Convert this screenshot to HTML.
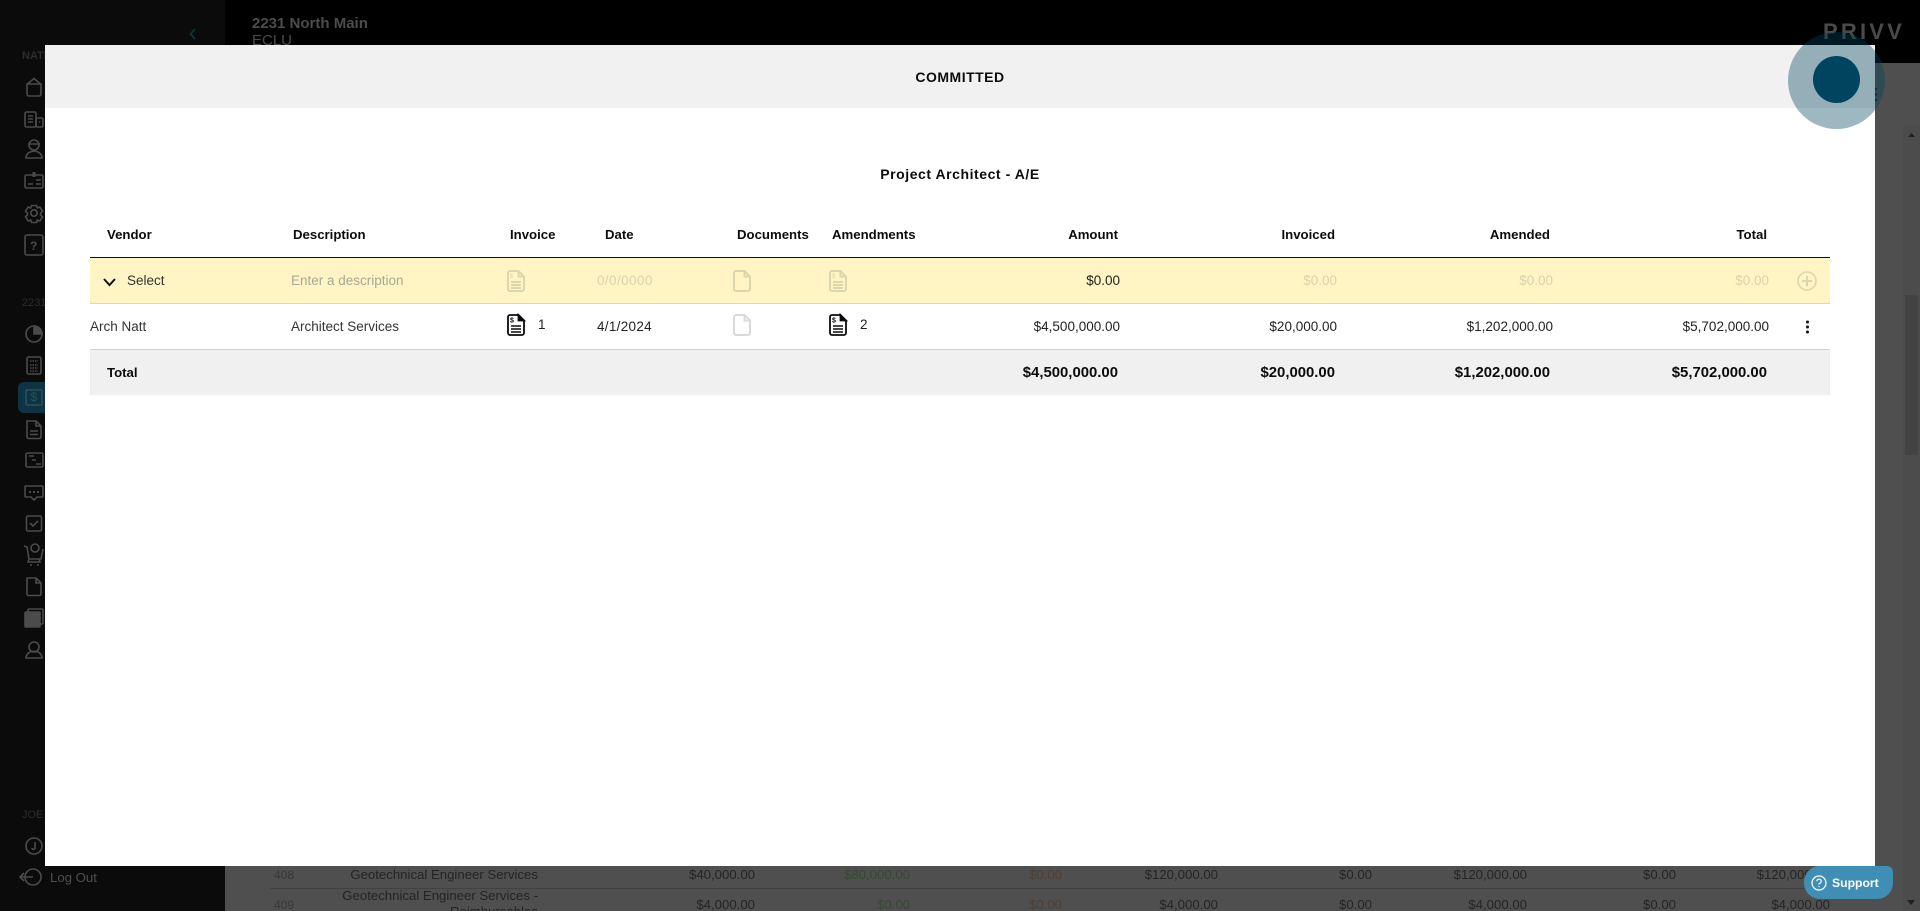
<!DOCTYPE html>
<html lang="en"><head><meta charset="utf-8"><title>Committed</title>
<style>
*{box-sizing:border-box}
html,body{margin:0;padding:0;width:1920px;height:911px;overflow:hidden;background:#4f4f4f}
body{font-family:"Liberation Sans",sans-serif;position:relative;color:#1a1a1a}
.a{position:absolute;white-space:nowrap;line-height:16px}
.t{font-size:13.5px;transform:translateY(-50%);margin-top:1px}
.tr{font-size:13.5px;transform:translate(-100%,-50%);margin-top:1px}
.b{font-weight:700;color:#0c0c0c}
.t.b,.tr.b{font-size:13.2px}
.tr.b.big{font-size:14.9px}
.m{color:#d8d3ae}
.bg{font-size:13.2px;color:#242424;transform:translate(-100%,-50%)}
svg{position:absolute;overflow:visible;fill:none}
.n{stroke:#4b4b4b;stroke-width:1.6}
</style></head><body>
<!-- app behind -->
<div class="a" style="left:0;top:0;width:225px;height:911px;background:#0b0b0b"></div>
<div class="a" style="left:225px;top:0;width:1695px;height:63px;background:#000"></div>
<div class="a" style="left:252px;top:16px;font-size:15px;font-weight:700;color:#4c4c4c">2231 North Main</div>
<div class="a" style="left:252px;top:33px;font-size:15px;color:#4c4c4c">ECLU</div>
<div class="a" style="left:1823px;top:24px;font-size:22px;font-weight:700;letter-spacing:3.2px;color:#4a4a4a">PRIVV</div>
<svg style="left:188px;top:27px" width="10" height="14" viewBox="0 0 10 14"><path d="M7 2 2.500 7 7 12" stroke="#12303c" stroke-width="2"/></svg>
<div class="a" style="left:22px;top:48px;font-size:11px;font-weight:700;color:#2c2c2c">NATE</div>
<div class="a" style="left:22px;top:295px;font-size:11px;color:#2c2c2c">2231</div>
<div class="a" style="left:22px;top:807px;font-size:11px;color:#2c2c2c">JOE</div>
<div class="a" style="left:18px;top:382px;width:40px;height:31px;background:#0e3443;border-radius:6px"></div>

<!-- sidebar icons -->
<svg class="n" style="left:0;top:0" width="60" height="911" viewBox="0 0 60 911">
<path d="M27.500 84 34 78.500 40.500 84M27 84h14v10a2 2 0 0 1-2 2H29a2 2 0 0 1-2-2Z"/>
<rect x="25" y="112" width="11" height="15" rx="1.500"/><rect x="36" y="118" width="7" height="9" rx="1.500"/><path d="M28 116h5M28 119h5M28 122h5M39 122h1"/>
<circle cx="34" cy="145" r="5"/><path d="M28 144h12M26 158c0-9 16-9 16 0Z"/>
<rect x="25" y="175" width="18" height="13" rx="1.500"/><path d="M28 184h5M36 180h5M36 184h5"/><path d="M34 172v5" stroke-width="3"/>
<circle cx="34" cy="213" r="3.200"/><path d="M31.500 205.500h5l.8 2.500 2.500-1 2.700 4.200-2 2v1.600l2 2-2.700 4.200-2.500-1-.8 2.500h-5l-.8-2.500-2.500 1-2.700-4.200 2-2v-1.600l-2-2 2.700-4.200 2.500 1Z"/>
<rect x="25" y="235" width="18" height="20" rx="2"/>
<circle cx="34" cy="334" r="8"/><path d="M34 326v8h8A8 8 0 0 0 34 326Z" fill="#4b4b4b"/>
<rect x="27" y="357" width="14" height="17" rx="1.500"/><path d="M30 361h8M30 365h8M30 368h8M30 371h8" stroke-dasharray="1.500 1"/>
<rect x="26" y="390" width="16" height="15" rx="1" stroke="#29505f"/>
<path d="M27 421h9l5 5v11a1.500 1.500 0 0 1-1.500 1.500h-11A1.500 1.500 0 0 1 27 437ZM36 421v5h5M30 431h8M30 434.500h8"/>
<rect x="26" y="453" width="17" height="14" rx="1.500"/><path d="M29 456h5M32 460h4M36 464h5"/>
<path d="M26 486h16a1 1 0 0 1 1 1v9a1 1 0 0 1-1 1h-5l-3 3-3-3h-5a1 1 0 0 1-1-1v-9a1 1 0 0 1 1-1Z"/><path d="M29 492h2M33 492h2M37 492h2" stroke-width="2"/>
<rect x="26.500" y="516" width="15" height="15" rx="1.500"/><path d="M30 523l3 3 5-5"/>
<path d="M24 546l3 1 2 12h12l2-10M29 559l-1 3h12l-1-3M30 565h2M37 565h2"/><circle cx="35" cy="548" r="4"/>
<path d="M27 578h9l5 5v11a1.500 1.500 0 0 1-1.500 1.500h-11A1.500 1.500 0 0 1 27 594ZM36 578v5h5"/>
<rect x="28" y="609" width="15" height="15" rx="1"/><rect x="25" y="612" width="15" height="15" rx="1" fill="#4b4b4b"/>
<circle cx="34" cy="647" r="5"/><path d="M26 658c0-9 16-9 16 0Z"/>
<circle cx="34" cy="846" r="8"/><path d="M35 842v6a1.500 1.500 0 0 1-3 0"/>
<circle cx="33" cy="877" r="8"/><path d="M20 877h13M24 873l-4 4 4 4"/>
</svg>
<div class="a" style="left:30px;top:238px;font-size:12px;font-weight:700;color:#4b4b4b">?</div>
<div class="a" style="left:30.500px;top:389px;font-size:12px;color:#29505f">$</div>
<div class="a" style="left:50px;top:870px;font-size:13.200px;color:#4f4f4f">Log Out</div>

<!-- background table -->
<div class="a" style="left:270px;top:888px;width:1600px;height:1px;background:#414141"></div>
<div class="a" style="left:274px;top:867px;font-size:12px;color:#383838">408</div>
<div class="a" style="left:274px;top:897px;font-size:12px;color:#383838">409</div>
<div class="a bg" style="left:538px;top:875px">Geotechnical Engineer Services</div>
<div class="a bg" style="left:538px;top:896px">Geotechnical Engineer Services -</div>
<div class="a bg" style="left:538px;top:912px">Reimbursables</div>
<div class="a bg" style="left:755px;top:875px">$40,000.00</div><div class="a bg" style="left:755px;top:905px">$4,000.00</div>
<div class="a bg" style="left:910px;top:875px;color:#344a30">$80,000.00</div><div class="a bg" style="left:910px;top:905px;color:#344a30">$0.00</div>
<div class="a bg" style="left:1062px;top:875px;color:#4d3f35">$0.00</div><div class="a bg" style="left:1062px;top:905px;color:#4d3f35">$0.00</div>
<div class="a bg" style="left:1218px;top:875px">$120,000.00</div><div class="a bg" style="left:1218px;top:905px">$4,000.00</div>
<div class="a bg" style="left:1372px;top:875px">$0.00</div><div class="a bg" style="left:1372px;top:905px">$0.00</div>
<div class="a bg" style="left:1527px;top:875px">$120,000.00</div><div class="a bg" style="left:1527px;top:905px">$4,000.00</div>
<div class="a bg" style="left:1676px;top:875px">$0.00</div><div class="a bg" style="left:1676px;top:905px">$0.00</div>
<div class="a bg" style="left:1830px;top:875px">$120,000.00</div><div class="a bg" style="left:1830px;top:905px">$4,000.00</div>

<!-- scrollbar -->
<div class="a" style="left:1903px;top:125px;width:17px;height:786px;background:#4c4c4c"></div>
<div class="a" style="left:1905px;top:295px;width:13px;height:160px;background:#434343"></div>
<svg style="left:1908px;top:133px" width="7" height="4"><path d="M3.500 0 7 4H0Z" fill="#1f1f1f"/></svg>
<svg style="left:1907px;top:900px" width="8" height="5"><path d="M0 0H8L4 5Z" fill="#1f1f1f"/></svg>

<!-- modal -->
<div class="a" style="left:45px;top:45px;width:1830px;height:821px;background:#fff"></div>
<div class="a" style="left:45px;top:45px;width:1830px;height:63px;background:#f1f1f1"></div>
<div class="a b" style="left:960px;top:77px;font-size:14px;letter-spacing:.5px;transform:translate(-50%,-50%)">COMMITTED</div>
<div class="a b" style="left:960px;top:174px;font-size:14px;letter-spacing:.55px;transform:translate(-50%,-50%)">Project Architect - A/E</div>

<div class="a" style="left:90px;top:257px;width:1740px;height:47px;background:#fff5c4;border-top:1px solid #111;border-bottom:1px solid #d6d6d0"></div>
<div class="a" style="left:90px;top:349px;width:1740px;height:46px;background:#f0f0f0;border-top:1px solid #d0d0d0"></div>

<div class="a t b" style="left:107px;top:234px">Vendor</div>
<div class="a t b" style="left:293px;top:234px">Description</div>
<div class="a t b" style="left:510px;top:234px">Invoice</div>
<div class="a t b" style="left:605px;top:234px">Date</div>
<div class="a t b" style="left:737px;top:234px">Documents</div>
<div class="a t b" style="left:832px;top:234px">Amendments</div>
<div class="a tr b" style="left:1118px;top:234px">Amount</div>
<div class="a tr b" style="left:1335px;top:234px">Invoiced</div>
<div class="a tr b" style="left:1550px;top:234px">Amended</div>
<div class="a tr b" style="left:1767px;top:234px">Total</div>

<svg style="left:102px;top:277px" width="15" height="10" viewBox="0 0 15 10"><path d="M2 2 7.500 8 13 2" stroke="#111" stroke-width="2"/></svg>
<div class="a t" style="left:127px;top:280px;color:#333">Select</div>
<div class="a t" style="left:291px;top:280px;color:#a9a796">Enter a description</div>
<div class="a t m" style="left:597px;top:280px;letter-spacing:.4px">0/0/0000</div>
<div class="a tr" style="left:1120px;top:280px;color:#222">$0.00</div>
<div class="a tr m" style="left:1337px;top:280px">$0.00</div>
<div class="a tr m" style="left:1553px;top:280px">$0.00</div>
<div class="a tr m" style="left:1769px;top:280px">$0.00</div>

<!-- doc icons -->
<svg style="left:507px;top:270px" width="18" height="22" viewBox="0 0 18 22" stroke="#dcd6ae" stroke-width="2"><path d="M3 1h8.500L17 6.500V19a2 2 0 0 1-2 2H3a2 2 0 0 1-2-2V3a2 2 0 0 1 2-2ZM11.500 1v5.500H17M4 12h10M4 15h10M4 18h10"/><text x="3" y="8" font-size="6" fill="#dcd6ae" stroke="none" font-family="Liberation Sans">$</text></svg>
<svg style="left:733px;top:270px" width="18" height="22" viewBox="0 0 18 22" stroke="#dcd6ae" stroke-width="2"><path d="M3 1h8.500L17 6.500V19a2 2 0 0 1-2 2H3a2 2 0 0 1-2-2V3a2 2 0 0 1 2-2ZM11.500 1v5.500H17"/></svg>
<svg style="left:829px;top:270px" width="18" height="22" viewBox="0 0 18 22" stroke="#dcd6ae" stroke-width="2"><path d="M3 1h8.500L17 6.500V19a2 2 0 0 1-2 2H3a2 2 0 0 1-2-2V3a2 2 0 0 1 2-2ZM11.500 1v5.500H17M4 12h10M4 15h10M4 18h10"/><text x="3" y="8" font-size="6" fill="#dcd6ae" stroke="none" font-family="Liberation Sans">$</text></svg>
<svg style="left:1797px;top:271px" width="20" height="20" viewBox="0 0 20 20" stroke="#dcd6ae" stroke-width="1.600"><circle cx="10" cy="10" r="9"/><path d="M10 5v10M5 10h10" stroke-width="2"/></svg>

<svg style="left:507px;top:314px" width="18" height="22" viewBox="0 0 18 22" stroke="#0b0b0b" stroke-width="1.800"><path d="M3 1h8.500L17 6.500V19a2 2 0 0 1-2 2H3a2 2 0 0 1-2-2V3a2 2 0 0 1 2-2Z"/><path d="M11.500 1v5.500H17L11.500 1Z" fill="#0b0b0b"/><path d="M4 12h10M4 15h10M4 18h10" stroke-width="1.500"/><text x="3" y="8.500" font-size="7" font-weight="700" fill="#0b0b0b" stroke="none" font-family="Liberation Sans">$</text></svg>
<svg style="left:733px;top:314px" width="18" height="22" viewBox="0 0 18 22" stroke="#d9d9d9" stroke-width="2"><path d="M3 1h8.500L17 6.500V19a2 2 0 0 1-2 2H3a2 2 0 0 1-2-2V3a2 2 0 0 1 2-2ZM11.500 1v5.500H17"/></svg>
<svg style="left:829px;top:314px" width="18" height="22" viewBox="0 0 18 22" stroke="#0b0b0b" stroke-width="1.800"><path d="M3 1h8.500L17 6.500V19a2 2 0 0 1-2 2H3a2 2 0 0 1-2-2V3a2 2 0 0 1 2-2Z"/><path d="M11.500 1v5.500H17L11.500 1Z" fill="#0b0b0b"/><path d="M4 12h10M4 15h10M4 18h10" stroke-width="1.500"/><text x="3" y="8.500" font-size="7" font-weight="700" fill="#0b0b0b" stroke="none" font-family="Liberation Sans">$</text></svg>
<svg style="left:1805px;top:320px" width="5" height="15"><circle cx="2.500" cy="2" r="1.500" fill="#111"/><circle cx="2.500" cy="7" r="1.500" fill="#111"/><circle cx="2.500" cy="12" r="1.500" fill="#111"/></svg>

<div class="a t" style="left:90px;top:326px;color:#333">Arch Natt</div>
<div class="a t" style="left:291px;top:326px;color:#333">Architect Services</div>
<div class="a t" style="left:538px;top:324px;color:#222">1</div>
<div class="a t" style="left:860px;top:324px;color:#222">2</div>
<div class="a t" style="left:597px;top:326px;color:#222;letter-spacing:.3px">4/1/2024</div>
<div class="a tr" style="left:1120px;top:326px;color:#222">$4,500,000.00</div>
<div class="a tr" style="left:1337px;top:326px;color:#222">$20,000.00</div>
<div class="a tr" style="left:1553px;top:326px;color:#222">$1,202,000.00</div>
<div class="a tr" style="left:1769px;top:326px;color:#222">$5,702,000.00</div>

<div class="a t b" style="left:107px;top:372px">Total</div>
<div class="a tr b big" style="left:1118px;top:372px">$4,500,000.00</div>
<div class="a tr b big" style="left:1335px;top:372px">$20,000.00</div>
<div class="a tr b big" style="left:1550px;top:372px">$1,202,000.00</div>
<div class="a tr b big" style="left:1767px;top:372px">$5,702,000.00</div>

<!-- pulse highlight -->
<svg style="left:1875px;top:87px" width="3" height="16"><circle cx="1" cy="2" r="1.200" fill="#10232c"/><circle cx="1" cy="7.500" r="1.200" fill="#10232c"/><circle cx="1" cy="13" r="1.200" fill="#10232c"/></svg>
<div class="a" style="left:1788px;top:31.500px;width:97px;height:97px;border-radius:50%;background:rgba(0,68,95,.38)"></div>
<div class="a" style="left:1812.500px;top:56px;width:47px;height:47px;border-radius:50%;background:#00445f"></div>

<!-- support -->
<div class="a" style="left:1804px;top:866px;width:89px;height:33px;background:#3f8fb5;border-radius:16px 6px 16px 16px"></div>
<svg style="left:1811px;top:875px" width="16" height="16" viewBox="0 0 16 16" stroke="#fff" stroke-width="1.200"><circle cx="8" cy="8" r="7"/><path d="M5.800 6.300A2.200 2.200 0 1 1 8 8.500V9.500M8 11v1"/></svg>
<div class="a" style="left:1832px;top:875px;font-size:12.200px;font-weight:700;color:#fff">Support</div>
</body></html>
